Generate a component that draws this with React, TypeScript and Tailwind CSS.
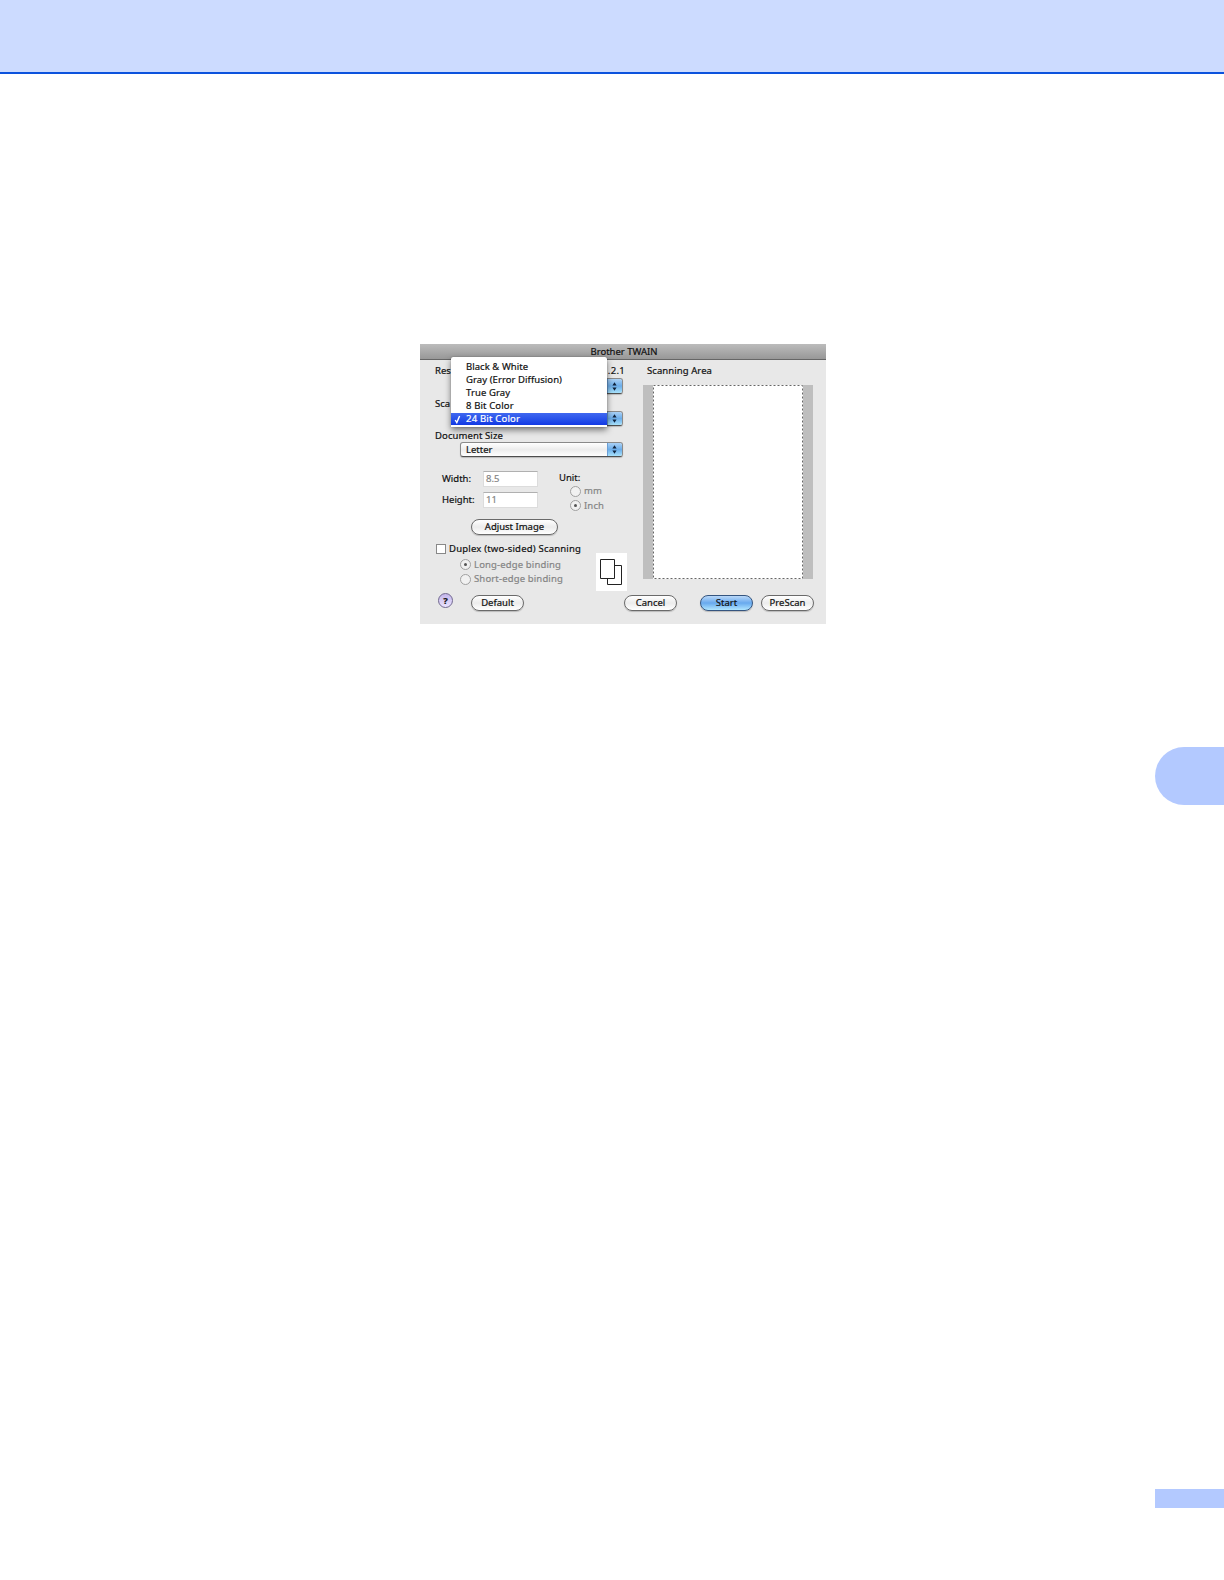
import clsx from "clsx";
import type { ReactNode } from "react";

const colorModes = [
  { label: "Black & White", tracking: "tracking-[0.05px]" },
  { label: "Gray (Error Diffusion)", tracking: "tracking-[0.07px]" },
  { label: "True Gray", tracking: "tracking-[0.1px]" },
  { label: "8 Bit Color", tracking: "tracking-[0.13px]" },
  { label: "24 Bit Color", tracking: "tracking-[0.2px]" },
];

function Arrows() {
  return (
    <span className="flex h-full w-[15px] items-center justify-center border-l border-[#6a9fd6] bg-linear-to-b from-[#a9d0f5] via-[#6cade9] to-[#a8e2fb] pr-[2px]">
      <svg width="5" height="9" viewBox="0 0 5 9" fill="#10233c">
        <path d="M2.5 0.3 4.6 3.5H0.4zM2.5 8.7 0.4 5.5h4.2z" />
      </svg>
    </span>
  );
}

function Select({ value, className }: { value?: string; className?: string }) {
  return (
    <div
      className={clsx(
        "ml-[40px] flex w-[163px] items-center justify-between overflow-hidden rounded-[3px] border border-[#8a8a8a] border-b-[#4e4e4e] bg-linear-to-b from-white via-[#ededed] to-white pl-[5px] shadow-[0_1px_1px_rgba(0,0,0,0.2)]",
        className
      )}
    >
      <span>{value}</span>
      <Arrows />
    </div>
  );
}

function Radio({ label, checked }: { label: string; checked?: boolean }) {
  return (
    <div className="flex h-[14.4px] items-center gap-[3px] text-[#858585]">
      <span className="flex size-[11px] shrink-0 items-center justify-center rounded-full border border-[#a0a0a0] bg-[#f1f1f1]">
        {checked && <span className="size-[3px] rounded-full bg-[#555]" />}
      </span>
      <span className="tracking-[0.15px]">{label}</span>
    </div>
  );
}

function Field({ label, value }: { label: string; value: string }) {
  return (
    <div className="flex h-[16px] items-center">
      <span className="w-[41px]">{label}</span>
      <span className="flex h-[16px] w-[55px] items-center border border-[#dcdcdc] border-t-[#b0b0b0] bg-white pl-[2px] text-[#858585]">
        {value}
      </span>
    </div>
  );
}

function Button({
  children,
  primary,
  className,
}: {
  children: ReactNode;
  primary?: boolean;
  className?: string;
}) {
  return (
    <button
      className={clsx(
        "flex h-[16px] items-center justify-center rounded-full border shadow-[0_1px_1px_rgba(0,0,0,0.2)]",
        primary
          ? "border-[#35557f] bg-linear-to-b from-[#b9d8f8] via-[#68a9ee] to-[#b0e6ff]"
          : "border-[#6a6a6a] bg-linear-to-b from-white via-[#ececec] to-white",
        className
      )}
    >
      {children}
    </button>
  );
}

function ColorMenu() {
  return (
    <ul className="absolute top-[13px] left-[31px] h-[70px] w-[156px] rounded-t-[2px] bg-white pt-[4px] shadow-[0_3px_6px_rgba(0,0,0,0.5),0_0_1px_rgba(0,0,0,0.5)]">
      {colorModes.map((mode, i) => (
        <li
          key={mode.label}
          className={clsx(
            "flex h-[12.9px] items-center pl-[3px]",
            i === 4 &&
              "bg-linear-to-b from-[#4068f0] to-[#1238e4] text-white"
          )}
        >
          <span className="w-[12px]">
            {i === 4 && (
              <svg width="8" height="9" viewBox="0 0 8 9" fill="none">
                <path d="M1.2 5 2.8 7.6 5.6 1" stroke="white" strokeWidth="1.4" />
              </svg>
            )}
          </span>
          <span className={mode.tracking}>{mode.label}</span>
        </li>
      ))}
    </ul>
  );
}

function TwainDialog() {
  return (
    <div className="relative mt-[270px] ml-[420px] flex h-[280px] w-[406px] flex-col bg-[#e8e8e8] font-['Noto_Sans','Open_Sans',sans-serif] text-[9.5px] leading-[12px] whitespace-nowrap text-[#111] [-webkit-text-stroke:0.2px]">
      <div className="flex h-[16px] shrink-0 items-center justify-center border-b border-[#666] bg-linear-to-b from-[#bcbcbc] to-[#989898] pl-[2px]">
        Brother TWAIN
      </div>
      <div className="flex h-[221px] shrink-0">
        <div className="w-[223px] pt-[4px]">
          <div className="flex h-[13px] items-center justify-between pr-[18px] pl-[15px]">
            <span>Res</span>
            <span className="tracking-[0.3px]">.2.1</span>
          </div>
          <Select className="mt-[1px] h-[16px]" />
          <div className="mt-[3px] flex h-[13px] items-center pl-[15px]">Sca</div>
          <Select className="mt-[1px] h-[15px]" />
          <div className="mt-[4px] flex h-[12px] items-center pl-[15px] tracking-[0.1px]">
            Document Size
          </div>
          <Select value="Letter" className="h-[15px]" />
          <div className="mt-[14px] flex pl-[22px]">
            <div className="flex w-[117px] flex-col gap-[5px]">
              <Field label="Width:" value="8.5" />
              <Field label="Height:" value="11" />
            </div>
            <div>
              <div className="flex h-[13px] items-center">Unit:</div>
              <div className="pl-[11px]">
                <Radio label="mm" />
                <Radio label="Inch" checked />
              </div>
            </div>
          </div>
          <Button className="mt-[6px] ml-[51px] w-[87px]">Adjust Image</Button>
          <div className="flex">
            <div className="w-[176px] pt-[8px]">
              <div className="flex h-[12px] items-center gap-[3px] pl-[16px]">
                <span className="size-[10px] border border-[#888] bg-white" />
                <span className="tracking-[0.2px]">Duplex (two-sided) Scanning</span>
              </div>
              <div className="mt-[3px] pl-[40px]">
                <Radio label="Long-edge binding" checked />
                <Radio label="Short-edge binding" />
              </div>
            </div>
            <div className="mt-[18px] flex h-[38px] w-[31px] justify-center bg-white pt-[6px]">
              <svg width="23" height="27" viewBox="0 0 23 27" fill="white" stroke="#222">
                <path d="M7.5 6.5h14v19h-14z" />
                <path d="M0.5 0.5h14v19h-14z" />
              </svg>
            </div>
          </div>
        </div>
        <div className="pt-[4px]">
          <div className="flex h-[13px] items-center pl-[4px] tracking-[0.08px]">
            Scanning Area
          </div>
          <div className="mt-[8px] flex h-[194px] w-[170px] justify-center bg-[#bebebe]">
            <svg width="150" height="194" viewBox="0 0 150 194">
              <rect width="150" height="194" fill="white" />
              <rect x="0.5" y="0.5" width="149" height="193" fill="none" stroke="#666" strokeDasharray="2 2" />
            </svg>
          </div>
        </div>
      </div>
      <div className="mt-[14px] flex">
        <div className="-mt-[2px] ml-[18px] flex size-[15px] items-center justify-center rounded-full border border-[#70678f] bg-linear-to-b from-[#c3b5ea] to-[#ebe4ff] font-bold">
          ?
        </div>
        <Button className="ml-[18px] w-[53px]">Default</Button>
        <Button className="ml-[100px] w-[53px]">Cancel</Button>
        <Button primary className="ml-[23px] w-[53px]">
          Start
        </Button>
        <Button className="ml-[8px] w-[53px]">PreScan</Button>
      </div>
      <ColorMenu />
    </div>
  );
}

function App() {
  return (
    <div className="flex h-[1580px] w-[1224px] flex-col bg-white">
      <header className="h-[74px] shrink-0 border-b-2 border-[#0b52dd] bg-[#ccdbff]" />
      <TwainDialog />
      <div className="mt-[123px] ml-auto h-[58px] w-[69px] rounded-l-full bg-[#b3c9ff]" />
      <div className="mt-[684px] ml-auto h-[19px] w-[69px] bg-[#b3c9ff]" />
    </div>
  );
}

export default App;
